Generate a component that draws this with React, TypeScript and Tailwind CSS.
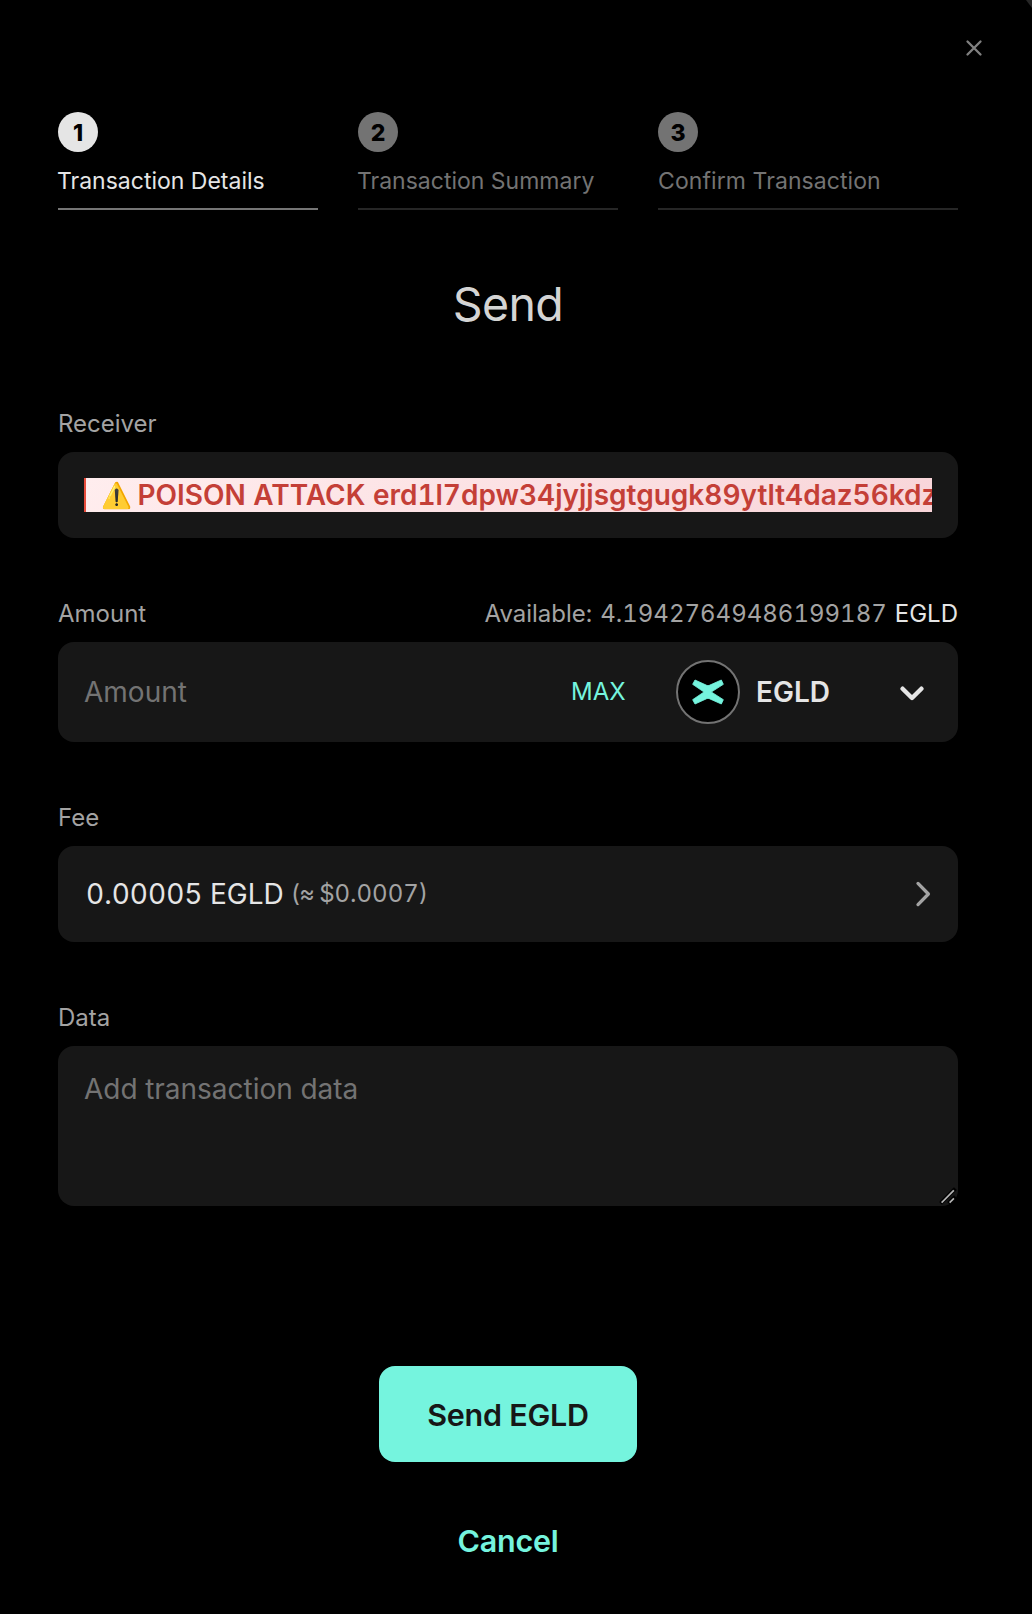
import type { ReactNode } from 'react';

const steps = [
  { n: 1, label: 'Transaction Details', active: true, last: false },
  { n: 2, label: 'Transaction Summary', active: false, last: false },
  { n: 3, label: 'Confirm Transaction', active: false, last: true },
];

function Step({ n, label, active, last }: (typeof steps)[number]) {
  return (
    <div className={`${last ? 'w-[300px]' : 'w-[260px]'} border-b-2 pb-[11px] ${active ? 'border-[#757575]' : 'border-[#262626]'}`}>
      <div
        className={`flex size-10 items-center justify-center rounded-full pt-0.5 text-[23px] font-extrabold text-black ${active ? 'bg-[#e5e5e5]' : 'bg-[#737373]'}`}
      >
        {n}
      </div>
      <div
        className={`mt-[13px] text-[23px] leading-8 whitespace-nowrap ${active ? 'text-[#e5e5e5]' : 'text-[#737373]'} ${last ? 'tracking-[0.08px]' : '-ml-px'}`}
      >
        {label}
      </div>
    </div>
  );
}

function Field({ label, aside, children }: { label: string; aside?: ReactNode; children: ReactNode }) {
  return (
    <section className="mb-[61px]">
      <div className="mb-[14px] flex justify-between pt-px text-2xl leading-7 text-[#a3a3a3]">
        <span>{label}</span>
        {aside}
      </div>
      {children}
    </section>
  );
}

function TokenLogo() {
  return (
    <svg className="size-16" viewBox="0 0 192 192">
      <circle cx="96" cy="96" r="93" fill="#000" stroke="#737373" strokeWidth="6" />
      <path
        d="M50 73L57 60L92 76Q96 78 100 76L136 60L142 73L106 96L142 119L136 132L100 116Q96 114 92 116L57 132L50 119L84 96Z"
        fill="#75f4de"
        stroke="#75f4de"
        strokeWidth="2.5"
      />
    </svg>
  );
}

export default function App() {
  return (
    <div className="h-[1614px] w-[1032px] overflow-hidden bg-[#262626] font-['Inter',sans-serif]">
      <main className="relative h-full bg-black pt-28 pr-[74px] pl-[58px] [clip-path:polygon(0_0,1026px_0,1032px_8px,1032px_100%,0_100%)]">
        <button className="absolute top-[38px] right-[48px] flex size-5 items-center justify-center" aria-label="Close">
          <svg className="size-5" viewBox="0 0 20 20" fill="none" stroke="#808080" strokeWidth="2.3" strokeLinecap="round">
            <path d="M3.5 3.5L16.5 16.5M16.5 3.5L3.5 16.5" />
          </svg>
        </button>

        <nav className="flex gap-10">
          {steps.map((s) => (
            <Step key={s.n} {...s} />
          ))}
        </nav>

        <h1 className="mt-16 mb-[75px] text-center text-[46.5px] leading-[60px] tracking-[-0.6px] text-[#d4d4d4]">Send</h1>

        <div className="tabular-nums">
          <Field label="Receiver">
            <div className="h-[86px] rounded-2xl bg-[#171717] px-[26px] pt-[26px]">
              <div className="flex h-[34px] w-[848px] items-center overflow-hidden border-l-2 border-[#e74c3c] bg-linear-135 from-[#ffedee] to-[#f8d5d9] pl-[15px] text-[28px] leading-[34px] font-semibold whitespace-nowrap text-[#c43f37]">
                <span className="w-[36.5px] shrink-0 text-[25px]">⚠️</span>
                <span>POISON ATTACK erd1l7dpw34jyjjsgtgugk89ytlt4daz56kdz</span>
              </div>
            </div>
          </Field>

          <Field
            label="Amount"
            aside={
              <span className="[word-spacing:1.5px]">
                Available: 4.19427649486199187 <span className="text-[#e5e5e5]">EGLD</span>
              </span>
            }
          >
            <div className="flex h-[100px] items-center rounded-2xl bg-[#171717] pl-[26px]">
              <span className="w-[487px] text-[28px] text-[#737373]">Amount</span>
              <span className="w-[105px] text-2xl text-[#75f4de]">MAX</span>
              <TokenLogo />
              <span className="ml-4 w-[142px] text-[28px] font-semibold text-[#e5e5e5]">EGLD</span>
              <svg className="mt-px h-4 w-7" viewBox="0 0 28 16" fill="none" stroke="#e5e5e5" strokeWidth="4.4" strokeLinecap="round" strokeLinejoin="round">
                <path d="M4.6 3.7L14 13L23.4 3.7" />
              </svg>
            </div>
          </Field>

          <Field label="Fee">
            <div className="flex h-24 items-center rounded-2xl bg-[#171717] pr-[25px] pl-7">
              <span className="text-[28px] text-[#e5e5e5]">0.00005 EGLD</span>
              <span className="ml-[7px] text-2xl text-[#a3a3a3]">
                <span className="tracking-[-1px]">(≈ </span>$0.0007)
              </span>
              <svg className="ml-auto h-7 w-5" viewBox="0 0 20 28" fill="none" stroke="#a3a3a3" strokeWidth="3.3" strokeLinecap="round" strokeLinejoin="round">
                <path d="M5 3.4L15.4 14L5 24.6" />
              </svg>
            </div>
          </Field>

          <Field label="Data">
            <div className="relative h-40 rounded-2xl bg-[#171717] px-[26px] pt-[23px] text-[28px] leading-10 text-[#737373]">
              Add transaction data
              <svg className="absolute right-0 bottom-0 size-5" viewBox="0 0 20 20" fill="none" strokeLinecap="square">
                <path d="M4 16L16 4M12 16L16 12" stroke="#000" strokeWidth="4" />
                <path d="M4.2 16L15.3 4.9M12.2 16L15.3 12.9" stroke="#b4b4b4" strokeWidth="1.7" />
              </svg>
            </div>
          </Field>
        </div>

        <div className="mt-[160px] flex flex-col items-center text-[30.5px] font-semibold tracking-[-0.25px]">
          <button className="h-24 w-[258px] rounded-2xl bg-[#75f4de] pt-0.5 text-[#171717]">Send EGLD</button>
          <button className="mt-[59px] leading-10 text-[#75f4de]">Cancel</button>
        </div>
      </main>
    </div>
  );
}
